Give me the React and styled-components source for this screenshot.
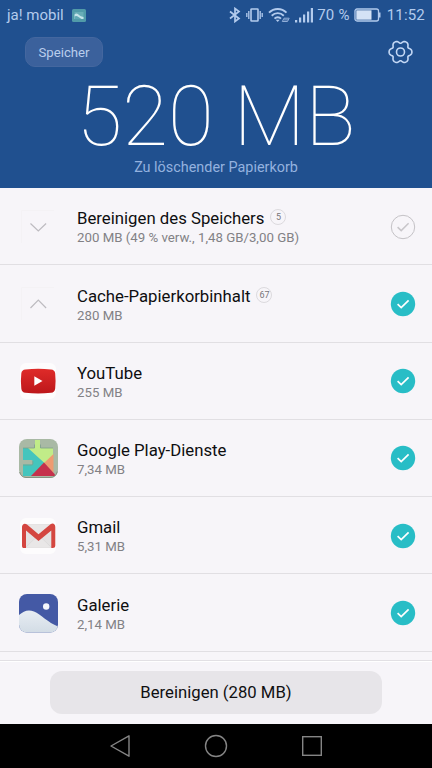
import React from "react";
import styled, { createGlobalStyle } from "styled-components";

const GlobalStyle = createGlobalStyle`
  * { box-sizing: border-box; }
  body { margin: 0; font-family: Roboto, "Noto Sans", sans-serif; }
  svg { display: block; flex: none; }
`;

const Screen = styled.div`
  width: 432px;
  height: 768px;
  display: flex;
  flex-direction: column;
  overflow: hidden;
  background: #f7f5f9;
`;

const Header = styled.header`
  flex: none;
  height: 188px;
  background: #20508f;
  color: #fff;
`;

const StatusBar = styled.div`
  height: 30px;
  padding: 0 7px 0 7px;
  display: flex;
  align-items: center;
  justify-content: space-between;
  color: #b3cbed;
  font-size: 15px;
  line-height: 30px;
`;

const StatusGroup = styled.div`
  display: flex;
  align-items: center;
  gap: ${(p) => p.$gap || 0}px;
`;

const StatusText = styled.span`
  letter-spacing: ${(p) => p.$spacing || 0}px;
  white-space: nowrap;
`;

const Toolbar = styled.div`
  height: 44px;
  padding: 0 19px 0 25px;
  display: flex;
  align-items: center;
  justify-content: space-between;
`;

const Chip = styled.button`
  width: 78px;
  height: 30px;
  padding: 0;
  border: 1px solid #44679f;
  border-radius: 10px;
  background: #3b619c;
  color: #b9cdec;
  font: 13.2px/30px Roboto, sans-serif;
`;

const Total = styled.div`
  height: 84px;
  padding-top: 2px;
  font-size: 83.5px;
  font-weight: 100;
  line-height: 82px;
  text-align: center;
  white-space: nowrap;
`;

const TotalCaption = styled.div`
  margin-top: 1px;
  text-align: center;
  color: #94b2df;
  font-size: 14.4px;
  line-height: 18px;
`;

const List = styled.main`
  flex: none;
  height: 472px;
  overflow: hidden;
`;

const Row = styled.div`
  height: 77.25px;
  padding: 1px 16px 0 18px;
  display: flex;
  align-items: center;
  border-bottom: 1px solid #e1dfe3;
`;

const IconSlot = styled.div`
  width: 40px;
  height: 40px;
  margin-right: 19px;
`;

const RowText = styled.div`
  flex: 1;
  padding-top: 1.5px;
`;

const TitleLine = styled.div`
  display: flex;
  align-items: center;
  height: 22px;
  gap: 6px;
`;

const Title = styled.span`
  color: #0e0e10;
  font-size: 16.75px;
  line-height: 22px;
  white-space: nowrap;
`;

const Count = styled.span`
  width: 16px;
  height: 16px;
  margin-top: -2px;
  border: 1px solid #dcdade;
  border-radius: 50%;
  color: #77767a;
  font-size: 9px;
  line-height: 14px;
  text-align: center;
`;

const Size = styled.div`
  color: #828185;
  font-size: 13.25px;
  line-height: 18px;
  white-space: nowrap;
`;

const ActionBar = styled.div`
  flex: none;
  height: 64px;
  display: flex;
  align-items: center;
  justify-content: center;
  border-top: 1px solid #e2e0e4;
  box-shadow: inset 0 1px 0 #fff;
  background: #f7f5f9;
`;

const CleanButton = styled.button`
  width: 332px;
  height: 43px;
  padding: 0;
  border: 0;
  border-radius: 12px;
  background: #e7e5e9;
  color: #101012;
  font: 16.7px/43px Roboto, sans-serif;
`;

const NavBar = styled.nav`
  flex: none;
  height: 44px;
  background: #000;
  display: flex;
  align-items: center;
  justify-content: center;
  gap: 72px;
`;

const PictureNotice = () => (
  <svg width="14" height="13" viewBox="0 0 14 13">
    <rect width="14" height="13" rx="1.500" fill="#519ba9" />
    <path d="M2.500 3h9v7h-9z" fill="#68adb7" />
    <path d="M2.500 5.500c2-2 3.500-.6 4.500.5q1.500 1.500 4.500 2v2h-9z" fill="#c5e4ea" />
    <path d="M2.500 7.500q2-1 4 .5l3 2h-7z" fill="#60a8b4" />
  </svg>
);

const Bluetooth = () => (
  <svg width="12" height="16" viewBox="0 0 12 16" fill="none" stroke="#b3cbed" strokeWidth="1.700">
    <path d="M1 4.500l9 7L6 14.500v-13l4 3-9 7" />
  </svg>
);

const Vibrate = () => (
  <svg width="17" height="14" viewBox="0 0 17 14" fill="none" stroke="#b3cbed" strokeWidth="1.600">
    <rect x="5" y="1" width="7" height="12" rx=".6" />
    <path d="M2.800 3v8M.8 5v4M14.200 3v8M16.200 5v4" strokeWidth="1.300" />
  </svg>
);

const Wifi = () => (
  <svg width="22" height="16" viewBox="0 0 22 16" fill="none" stroke="#b3cbed" strokeWidth="1.900">
    <path d="M1 5.700C6 .7 13.500.7 18.500 5.700M3.700 8.700c3.500-3.400 8.600-3.400 12.100 0M6.500 11.600c1.800-1.800 4.700-1.800 6.500 0" />
    <path d="M7.700 12.800h4l-2 2.200z" fill="#b3cbed" stroke="none" />
    <path d="M14.300 14.500l1.700-3.300h5.200l-1.700 3.300zM15.500 12.900h4.500" stroke="#91aed8" strokeWidth="1" />
  </svg>
);

const Signal = () => (
  <svg width="18" height="15" viewBox="0 0 18 15" fill="#b3cbed">
    <path d="M0 12h2.200v2.500H0zM4 9.500h2.200v5H4zM8 6.500h2.200v8H8zM12 3.500h2.200v11H12zM15.800 0H18v14.500h-2.200z" />
  </svg>
);

const Battery = () => (
  <svg width="27" height="14" viewBox="0 0 27 14">
    <rect x="1" y="1" width="23.500" height="12" rx="2" fill="none" stroke="#b3cbed" strokeWidth="1.300" />
    <rect x="2.300" y="2.300" width="15.200" height="9.400" fill="#d4e2f6" />
    <path d="M25.700 4.500v5" stroke="#b3cbed" strokeWidth="1.600" />
  </svg>
);

// Six rounded teeth: the third-order harmonic flattens each tip.
const gearOutline = Array.from({ length: 120 }, (_, i) => {
  const angle = (i * Math.PI) / 60;
  const radius = 10.3 + 1.35 * Math.cos(6 * angle) - 0.25 * Math.cos(12 * angle);
  return `${(12.5 + radius * Math.cos(angle)).toFixed(2)} ${(12 + radius * Math.sin(angle)).toFixed(2)}`;
});

const Gear = () => (
  <svg width="25" height="24" viewBox="0 0 25 24" fill="none" stroke="#c4d8f5" strokeWidth="1.600" strokeLinejoin="round">
    <path d={`M${gearOutline.join("L")}Z`} />
    <circle cx="12.500" cy="12" r="4" />
  </svg>
);

const Chevron = ({ up }) => (
  <svg width="40" height="40" viewBox="0 0 40 40" fill="none">
    <path d="M3.500 36V3.500H36" stroke="#f4f2f5" />
    <path d={up ? "M12.500 24l7.800-8 7.800 8" : "M12.500 16.500l7.800 7.500 7.800-7.500"} stroke="#bdbbc0" strokeWidth="1.200" />
  </svg>
);

const YouTube = () => (
  <svg width="40" height="40" viewBox="0 0 40 40">
    <defs>
      <linearGradient id="tubeRed" x1="0" y1="0" x2="0" y2="1">
        <stop stopColor="#df2b29" />
        <stop offset="1" stopColor="#bd171b" />
      </linearGradient>
    </defs>
    <rect x="2" y="2" width="36" height="36" rx="6" fill="#fdfcfd" />
    <path d="M7.500 8.500Q20 7.200 33 8.500q3.800.3 4.200 4 .8 7.500 0 15-.4 4-4.200 4.300-13 1.300-25.500 0-3.800-.3-4.200-4.300-.8-7.500 0-15 .4-3.700 4.200-4z" fill="url(#tubeRed)" />
    <path d="M16.300 15.300v9.400l8.200-4.700z" fill="#fff" />
  </svg>
);

const PlayServices = () => (
  <svg width="40" height="40" viewBox="0 0 40 40">
    <rect x="1" y="1" width="39" height="39" rx="8" fill="#a9b9a5" />
    <path d="M5 10h6l16 15-13 13H5z" fill="#44c5bd" />
    <path d="M10 10h7V2h5v8h13v7l-8 8.500z" fill="#c1ec88" />
    <path d="M35.500 16v19L26 25z" fill="#ee9b70" />
    <path d="M13 38l13-13.500L37 36.500V38z" fill="#c5314c" />
    <path d="M5 22h8.500q1 0 1 1v2.500q0 1-1 1H5z" fill="#a9b9a5" />
    <path d="M5 10h11.500V6.500M22.500 6.500V10H35M5 27h8.500q1.300 0 1.300-1v-3" fill="none" stroke="#7fa08b" strokeWidth=".8" />
    <path d="M1.700 34q1 5 6.300 5.500h24q6 0 7.300-6" fill="none" stroke="#859382" strokeWidth="1" />
  </svg>
);

const Gmail = () => (
  <svg width="40" height="40" viewBox="0 0 40 40">
    <rect x="2" y="2" width="36" height="36" rx="6" fill="#fdfcfd" />
    <path d="M7 8h27v24H7z" fill="#e5e3e3" />
    <path d="M8 31l12.500-12L33 31" fill="#e9e7e7" stroke="#d9d7d7" strokeWidth=".7" />
    <path d="M7 9l13.500 11.500L34 9" fill="#e9e7e7" />
    <path d="M4 11c0-3 2.800-4.300 5-2.500l11.500 9.800L32.500 8.300c2.300-1.700 4.800-.4 4.800 2.700v18.500c0 1.700-1 2.500-2.500 2.500h-1.500V14.500L20.500 25 8 14.500V32H6c-1.400 0-2-.8-2-2.300z" fill="#d44640" />
  </svg>
);

const Gallery = () => (
  <svg width="40" height="40" viewBox="0 0 40 40">
    <defs>
      <clipPath id="galleryTile"><rect x="1" y="1" width="39" height="38.500" rx="8" /></clipPath>
      <linearGradient id="snow" x1="0" y1="0" x2="0" y2="1">
        <stop stopColor="#e8edf3" />
        <stop offset="1" stopColor="#d2dce5" />
      </linearGradient>
    </defs>
    <g clipPath="url(#galleryTile)">
      <path d="M0 0h40v40H0z" fill="#4459a5" />
      <path d="M0 23c5-5 10-7 16-4.500C23 21.500 30 29.500 40 33.500V40H0z" fill="url(#snow)" />
      <circle cx="28.200" cy="13.500" r="3.200" fill="#f5f7fc" />
    </g>
  </svg>
);

const Check = ({ on }) => (
  <svg width="26" height="26" viewBox="0 0 26 26" fill="none">
    <circle cx="13" cy="13" r={on ? 12.2 : 11.7} fill={on ? "#28bdc6" : "none"} stroke={on ? "none" : "#c4c2c6"} />
    <path d="M7.600 13.100l3.600 3.500 7.400-7.300" stroke={on ? "#fff" : "#c8c6ca"} strokeWidth={on ? 1.7 : 1.5} />
  </svg>
);

const items = [
  { title: "Bereinigen des Speichers", count: 5, size: "200 MB (49 % verw., 1,48 GB/3,00 GB)", icon: <Chevron />, on: false },
  { title: "Cache-Papierkorbinhalt", count: 67, size: "280 MB", icon: <Chevron up />, on: true },
  { title: "YouTube", size: "255 MB", icon: <YouTube />, on: true },
  { title: "Google Play-Dienste", size: "7,34 MB", icon: <PlayServices />, on: true },
  { title: "Gmail", size: "5,31 MB", icon: <Gmail />, on: true },
  { title: "Galerie", size: "2,14 MB", icon: <Gallery />, on: true },
];

export default function App() {
  return (
    <Screen>
      <GlobalStyle />
      <Header>
        <StatusBar>
          <StatusGroup $gap={8}>
            <StatusText>ja! mobil</StatusText>
            <PictureNotice />
          </StatusGroup>
          <StatusGroup $gap={4}>
            <StatusGroup $gap={5}>
              <Bluetooth />
              <Vibrate />
              <Wifi />
              <Signal />
            </StatusGroup>
            <StatusText $spacing={0.3}>70 %</StatusText>
            <Battery />
            <StatusText $spacing={0.2}>&#8202;11:52</StatusText>
          </StatusGroup>
        </StatusBar>
        <Toolbar>
          <Chip>Speicher</Chip>
          <Gear />
        </Toolbar>
        <Total>520 MB</Total>
        <TotalCaption>Zu löschender Papierkorb</TotalCaption>
      </Header>
      <List>
        {items.map((item) => (
          <Row key={item.title}>
            <IconSlot>{item.icon}</IconSlot>
            <RowText>
              <TitleLine>
                <Title>{item.title}</Title>
                {item.count && <Count>{item.count}</Count>}
              </TitleLine>
              <Size>{item.size}</Size>
            </RowText>
            <Check on={item.on} />
          </Row>
        ))}
      </List>
      <ActionBar>
        <CleanButton>Bereinigen (280 MB)</CleanButton>
      </ActionBar>
      <NavBar>
        <svg width="24" height="24" viewBox="0 0 24 24" fill="none" stroke="#858585" strokeWidth="1.400" strokeLinejoin="round">
          <path d="M21 1.800v20.400L3 12z" />
        </svg>
        <svg width="24" height="24" viewBox="0 0 24 24" fill="none" stroke="#858585" strokeWidth="1.400">
          <circle cx="12" cy="12" r="10.500" />
        </svg>
        <svg width="24" height="24" viewBox="0 0 24 24" fill="none" stroke="#858585" strokeWidth="1.400">
          <rect x="2.700" y="2.700" width="18.600" height="18.600" />
        </svg>
      </NavBar>
    </Screen>
  );
}
